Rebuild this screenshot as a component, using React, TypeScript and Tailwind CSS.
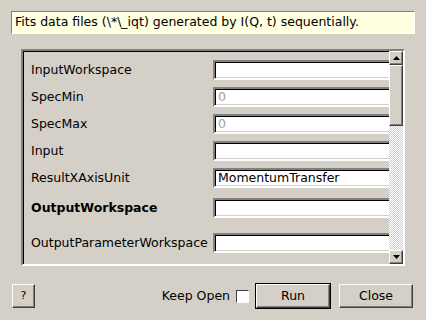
import React from "react";

const sunken =
  "border-2 border-t-[#808080] border-l-[#808080] border-b-white border-r-white shadow-[inset_1px_1px_0_#000,inset_-1px_-1px_0_#d4d0c8]";
const raised =
  "border border-t-white border-l-white border-b-[#404040] border-r-[#404040] shadow-[inset_-1px_-1px_0_#808080]";

type Row = { label: string; value?: string; placeholder?: string; bold?: boolean; mt: string };

const rows: Row[] = [
  { label: "InputWorkspace", mt: "mt-0" },
  { label: "SpecMin", placeholder: "0", mt: "mt-[7px]" },
  { label: "SpecMax", placeholder: "0", mt: "mt-[7px]" },
  { label: "Input", mt: "mt-[7px]" },
  { label: "ResultXAxisUnit", value: "MomentumTransfer", mt: "mt-[7px]" },
  { label: "OutputWorkspace", bold: true, mt: "mt-[10px]" },
  { label: "OutputParameterWorkspace", mt: "mt-[15px]" },
];

function Arrow({ down }: { down?: boolean }) {
  return (
    <svg width="7" height="4" viewBox="0 0 7 4">
      <polygon points={down ? "0,0 7,0 3.5,4" : "3.5,0 7,4 0,4"} fill="#000" />
    </svg>
  );
}

function ScrollButton({ down }: { down?: boolean }) {
  return (
    <div className={`flex h-[14px] w-[14px] items-center justify-center bg-[#d4d0c8] ${raised}`}>
      <Arrow down={down} />
    </div>
  );
}

export default function App() {
  return (
    <div className="h-[320px] w-[426px] bg-[#d4d0c8] font-['DejaVu_Sans',sans-serif] text-[12.5px] text-black">
      <div className="px-[11px] pt-[11px]">
        <div className="flex h-[23px] items-center border border-t-[#808080] border-l-[#808080] border-b-white border-r-white bg-[#ffffe1] pl-[3px]">
          Fits data files (\*\_iqt) generated by I(Q, t) sequentially.
        </div>
      </div>

      <div className={`mx-[21px] mt-[15px] flex h-[217px] w-[384px] ${sunken}`}>
        <div className="flex-1 overflow-hidden pl-[8px] pt-[9px]">
          {rows.map((r) => (
            <div key={r.label} className={`flex h-[20px] items-center ${r.mt}`}>
              <div className={`w-[182px] shrink-0 whitespace-nowrap ${r.bold ? "font-bold" : ""}`}>
                {r.label}
              </div>
              <div
                className={`flex h-[20px] w-[190px] shrink-0 items-center bg-white pl-[3px] ${sunken} ${r.placeholder ? "text-[#a0a0a0]" : ""}`}
              >
                {r.value ?? r.placeholder ?? ""}
              </div>
            </div>
          ))}
        </div>
        <div className="flex w-[14px] flex-col">
          <ScrollButton />
          <div className={`h-[61px] bg-[#d4d0c8] ${raised}`} />
          <div className="flex-1 bg-[repeating-conic-gradient(#ffffff_0_25%,#d4d0c8_0_50%)] bg-[length:2px_2px]" />
          <ScrollButton down />
        </div>
      </div>

      <div className="mt-[17px] flex items-center pl-[12px] pr-[13px]">
        <button className={`flex h-[24px] w-[23px] items-center justify-center bg-[#d4d0c8] text-[11px] ${raised}`}>
          ?
        </button>
        <div className="flex-1" />
        <span>Keep Open</span>
        <span className="ml-[6px] h-[13px] w-[13px] border border-t-[#404040] border-l-[#404040] border-b-white border-r-white bg-white" />
        <div className="ml-[6px] border border-black">
          <button className={`flex h-[24px] w-[74px] items-center justify-center bg-[#d4d0c8] ${raised}`}>
            Run
          </button>
        </div>
        <button className={`ml-[8px] flex h-[24px] w-[74px] items-center justify-center bg-[#d4d0c8] ${raised}`}>
          Close
        </button>
      </div>
    </div>
  );
}
